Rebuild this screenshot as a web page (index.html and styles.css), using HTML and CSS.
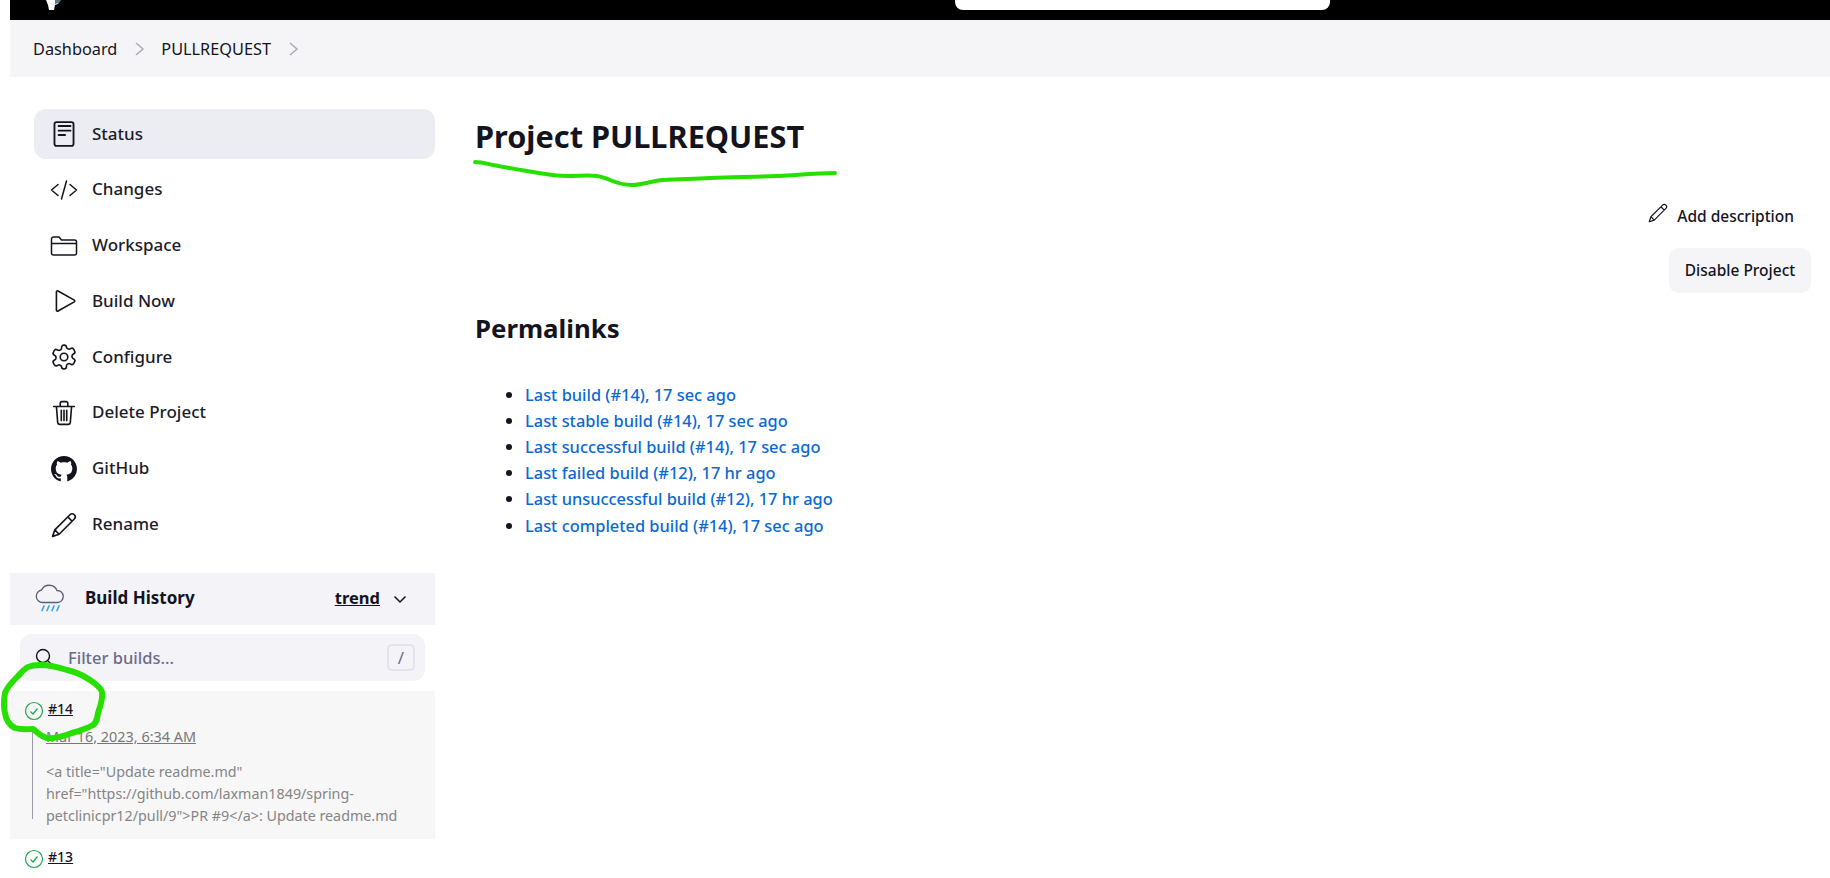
FILE: index.html
```html
<!DOCTYPE html>
<html lang="en">
<head>
    <meta charset="UTF-8">
    <title>PULLREQUEST [Jenkins]</title>
    <link rel="stylesheet" href="styles.css">
</head>
<body>
    <header class="topbar">
        <svg class="logo" width="30" height="10" viewBox="0 0 30 10"><path d="M8 0h14l-2 4-3 1-1 5h-5l-1-5z" fill="#fff"/><path d="M17 0h6l-2 3-4 1z" fill="#5b7a86"/></svg>
        <div class="search"></div>
    </header>
    <nav class="breadcrumbs">
        <a href="#">Dashboard</a>
        <svg class="crumb-sep" width="12" height="16" viewBox="0 0 12 16"><path d="M2 2l7 6-7 6" fill="none" stroke="#a9a9b8" stroke-width="1.5"/></svg>
        <a href="#">PULLREQUEST</a>
        <svg class="crumb-sep" width="12" height="16" viewBox="0 0 12 16"><path d="M2 2l7 6-7 6" fill="none" stroke="#a9a9b8" stroke-width="1.5"/></svg>
    </nav>

    <div class="page">
        <aside class="sidebar">
            <ul class="tasks">
                <li class="task active">
                    <svg class="icon icon-status" viewBox="0 0 24 24"><rect x="3.200" y="1" width="17.600" height="22" rx="2"/><path d="M7 4.600h11M7 8.900h11M7 12.900h6"/></svg>
                    <span>Status</span>
                </li>
                <li class="task">
                    <svg class="icon wide" viewBox="0 0 28 24"><path d="M8 6.500L1.500 12 8 17.500M20 6.500l6.500 5.500-6.500 5.500M16.500 3l-5 18"/></svg>
                    <span>Changes</span>
                </li>
                <li class="task">
                    <svg class="icon wide" viewBox="0 0 28 24"><path d="M1.500 19V5a2 2 0 0 1 2-2h5.500l2.500 3H24.500a2 2 0 0 1 2 2v11a2 2 0 0 1-2 2h-21a2 2 0 0 1-2-2zM1.500 9.500h25"/></svg>
                    <span>Workspace</span>
                </li>
                <li class="task">
                    <svg class="icon" viewBox="0 0 24 24"><path d="M5 3.500v17a1 1 0 0 0 1.500.8l15-8.500a1 1 0 0 0 0-1.600l-15-8.500A1 1 0 0 0 5 3.500z"/></svg>
                    <span>Build Now</span>
                </li>
                <li class="task">
                    <svg class="icon" viewBox="0 0 24 24"><path d="M12.220 1h-.44a2 2 0 0 0-2 2v.68a2 2 0 0 1-1 1.730l-.43.250a2 2 0 0 1-2 0l-.65-.28a2 2 0 0 0-2.730.730l-.720 1.380a2 2 0 0 0 .730 2.730l.650.4a2 2 0 0 1 1 1.720v.51a2 2 0 0 1-1 1.740l-.650.39a2 2 0 0 0-.730 2.730l.720 1.380a2 2 0 0 0 2.730.730l.650-.28a2 2 0 0 1 2 0l.43.250a2 2 0 0 1 1 1.730V21a2 2 0 0 0 2 2h.44a2 2 0 0 0 2-2v-.680a2 2 0 0 1 1-1.730l.43-.250a2 2 0 0 1 2 0l.650.280a2 2 0 0 0 2.730-.730l.720-1.390a2 2 0 0 0-.730-2.730l-.650-.380a2 2 0 0 1-1-1.740v-.5a2 2 0 0 1 1-1.740l.650-.390a2 2 0 0 0 .730-2.730l-.720-1.380a2 2 0 0 0-2.730-.730l-.650.280a2 2 0 0 1-2 0l-.43-.250a2 2 0 0 1-1-1.730V3a2 2 0 0 0-2-2z"/><circle cx="12" cy="12" r="3.500"/></svg>
                    <span>Configure</span>
                </li>
                <li class="task">
                    <svg class="icon" viewBox="0 0 24 24"><path d="M5 6l1.200 15a2 2 0 0 0 2 1.500h7.600a2 2 0 0 0 2-1.500L19 6M2.500 6h19M8.500 6V3a1.500 1.500 0 0 1 1.500-1.500h4A1.500 1.500 0 0 1 15.500 3v3M9.500 9.500v9.500M12 9.500v9.500M14.500 9.500v9.500"/></svg>
                    <span>Delete Project</span>
                </li>
                <li class="task">
                    <svg class="icon solid" viewBox="0 0 16 16"><path d="M8 0C3.580 0 0 3.580 0 8c0 3.540 2.290 6.530 5.470 7.590.4.070.55-.17.55-.38 0-.19-.01-.82-.01-1.490-2.010.37-2.530-.49-2.690-.94-.09-.23-.48-.94-.82-1.130-.28-.15-.68-.52-.01-.53.63-.01 1.080.58 1.230.82.720 1.210 1.870.870 2.330.660.070-.520.280-.870.510-1.070-1.780-.2-3.640-.890-3.640-3.950 0-.870.310-1.590.820-2.150-.080-.2-.360-1.020.080-2.120 0 0 .670-.210 2.200.820.640-.180 1.320-.270 2-.270s1.360.090 2 .270c1.530-1.040 2.200-.820 2.200-.820.440 1.100.160 1.920.080 2.120.510.560.820 1.270.820 2.150 0 3.070-1.870 3.750-3.650 3.950.290.250.540.730.540 1.480 0 1.070-.010 1.930-.010 2.200 0 .210.150.460.550.380A8.013 8.013 0 0 0 16 8c0-4.420-3.580-8-8-8z"/></svg>
                    <span>GitHub</span>
                </li>
                <li class="task">
                    <svg class="icon" viewBox="0 0 24 24"><path d="M17.500 2.500a2.800 2.800 0 0 1 4 4L7.500 20.500 1.500 22.500l2-6zM15.500 4.500l4 4M3.500 16.500l4 4"/></svg>
                    <span>Rename</span>
                </li>
            </ul>

            <section class="history">
                <div class="history-head">
                    <svg class="weather" width="30" height="30" viewBox="0 0 30 30">
                        <path d="M7.500 20.500A6.300 6.300 0 0 1 6.500 8A8.500 8.500 0 0 1 22 8.500A6 6 0 0 1 22.500 20.500z" fill="none" stroke="#5c5c78" stroke-width="1.300"/>
                        <path d="M9 24l-2 4.500M14 24l-2 4.500M19 24l-2 4.500M24 24l-2 4.500" fill="none" stroke="#35a9e6" stroke-width="1.700" stroke-linecap="round"/>
                    </svg>
                    <span class="history-title">Build History</span>
                    <a class="trend" href="#">trend</a>
                    <svg class="chevron" width="14" height="14" viewBox="0 0 14 14"><path d="M1.500 4.500L7 10l5.500-5.500" fill="none" stroke="#14141f" stroke-width="1.500"/></svg>
                </div>
                <div class="filter">
                    <svg class="filter-icon" width="18" height="18" viewBox="0 0 18 18"><circle cx="8" cy="8" r="6.500" fill="none" stroke="#14141f" stroke-width="1.400"/><path d="M13 13l4 4" stroke="#14141f" stroke-width="1.400"/></svg>
                    <span class="placeholder">Filter builds...</span>
                    <kbd class="slash">/</kbd>
                </div>
                <div class="build selected">
                    <div class="build-top">
                        <svg class="ok" width="20" height="20" viewBox="0 0 20 20"><circle cx="10" cy="10" r="8.500"/><path d="M6.500 10.500l2.500 2.500 4.500-5.500"/></svg>
                        <a class="build-num" href="#">#14</a>
                    </div>
                    <div class="build-body">
                        <a class="build-date" href="#">Mar 16, 2023, 6:34 AM</a>
                        <p class="build-desc">&lt;a title="Update readme.md" href="https://github.com/laxman1849/spring-petclinicpr12/pull/9"&gt;PR #9&lt;/a&gt;: Update readme.md</p>
                    </div>
                </div>
                <div class="build">
                    <div class="build-top">
                        <svg class="ok" width="20" height="20" viewBox="0 0 20 20"><circle cx="10" cy="10" r="8.500"/><path d="M6.500 10.500l2.500 2.500 4.500-5.500"/></svg>
                        <a class="build-num" href="#">#13</a>
                    </div>
                </div>
            </section>
        </aside>

        <main class="content">
            <h1>Project PULLREQUEST</h1>
            <div class="actions">
                <a class="add-desc" href="#">
                    <svg class="pen" width="20" height="20" viewBox="0 0 24 24"><path d="M17.500 2.500a2.800 2.800 0 0 1 4 4L7.500 20.500 1.500 22.500l2-6zM15.500 4.500l4 4M3.500 16.500l4 4" fill="none" stroke="#14141f" stroke-width="1.400" stroke-linejoin="round"/></svg>
                    Add description
                </a>
                <button class="disable">Disable Project</button>
            </div>
            <h2>Permalinks</h2>
            <ul class="permalinks">
                <li><a href="#">Last build (#14), 17 sec ago</a></li>
                <li><a href="#">Last stable build (#14), 17 sec ago</a></li>
                <li><a href="#">Last successful build (#14), 17 sec ago</a></li>
                <li><a href="#">Last failed build (#12), 17 hr ago</a></li>
                <li><a href="#">Last unsuccessful build (#12), 17 hr ago</a></li>
                <li><a href="#">Last completed build (#14), 17 sec ago</a></li>
            </ul>
        </main>
    </div>

    <!-- marker strokes drawn over the page -->
    <svg class="marker" width="1830" height="878" viewBox="0 0 1830 878">
        <path class="stroke-thin" d="M475 162C482 162 488 164 493 165C510 168 520 170 533 172C545 174 556 176 567 176C578 176 590 175 597 176C602 177 606 178 610 180C617 183 624 185 632 185C642 185 652 181 663 180C680 179 695 179 710 178C735 177 755 177 777 176C798 175 815 173 835 173"/>
        <path class="stroke-thick" d="M40 665C50 665 58 667 67 670C76 672 84 676 90 680C96 684 101 688 102 692C103 700 100 707 98 713C97 719 97 722 93 725C86 729 79 731 72 733C64 736 55 739 47 738C41 737 37 732 33 729C27 729 21 730 15 728C9 725 6 720 5 713C3 706 4 699 5 693C7 687 12 682 17 677C21 673 25 668 28 667C33 665 36 665 40 665"/>
    </svg>
</body>
</html>
```

FILE: styles.css
```css
* {
    box-sizing: border-box;
}
html, body {
    height: 878px;
    overflow: hidden;
}
body {
    font-family: "Noto Sans", Arial, sans-serif;
    color: #14141f;
    background-color: #fff;
    margin: 0;
    padding: 0 0 0 10px;
    position: relative;
}
a {
    color: inherit;
}

/* top bar */
.topbar {
    height: 20px;
    background-color: #000;
    display: flex;
    align-items: flex-start;
    padding-left: 28px;
}
.logo {
    flex: none;
}
.search {
    width: 375px;
    height: 10px;
    margin-left: 887px;
    background-color: #fff;
    border-radius: 0 0 8px 8px;
}
.breadcrumbs {
    height: 57px;
    background-color: #f5f5f7;
    display: flex;
    align-items: center;
    padding-left: 23px;
    font-size: 16.300px;
}
.breadcrumbs a {
    text-decoration: none;
}
.crumb-sep {
    margin: 0 15px 0 17px;
}

/* page columns */
.page {
    display: flex;
}
.sidebar {
    width: 425px;
    flex: none;
    padding-top: 32px;
}
.tasks {
    list-style: none;
    margin: 0 0 23px 24px;
    padding: 0;
}
.task {
    height: 50px;
    margin-bottom: 5.800px;
    display: flex;
    align-items: center;
    padding-left: 16px;
    font-size: 17px;
    font-weight: 500;
    color: #1c1c2b;
    border-radius: 12px;
}
.task span {
    margin-top: -2px;
}
.task.active {
    background-color: #ecedf2;
}
.icon {
    width: 28px;
    height: 26px;
    margin-right: 14px;
    fill: none;
    stroke: #14141f;
    stroke-width: 1.500;
    stroke-linejoin: round;
    stroke-linecap: round;
}
.icon-status {
    stroke-width: 1.700;
}
.icon.solid {
    fill: #14141f;
    stroke: none;
}

/* build history */
.history-head {
    height: 52px;
    background-color: #f3f3f8;
    display: flex;
    align-items: center;
    padding-left: 25px;
}
.weather {
    margin: -4px 20px 0 0;
}
.history-title {
    font-size: 17px;
    font-weight: 700;
    flex: 1;
    margin-top: -2px;
}
.trend {
    font-size: 16.500px;
    font-weight: 700;
    margin: -2px 13px 0 0;
}
.chevron {
    margin-right: 28px;
}
.filter {
    height: 47px;
    margin: 9px 10px 10px;
    background-color: #f3f3f8;
    border-radius: 12px;
    display: flex;
    align-items: center;
    padding: 0 10px 0 15px;
}
.filter-icon {
    margin-right: 15px;
}
.placeholder {
    flex: 1;
    font-size: 16.500px;
    font-weight: 500;
    color: #6d6b8a;
}
.slash {
    width: 28px;
    height: 27px;
    border: 2px solid #e3e3ec;
    border-radius: 5px;
    font-family: "Noto Sans", Arial, sans-serif;
    font-size: 17px;
    color: #6d6b8a;
    display: flex;
    align-items: center;
    justify-content: center;
}
.build {
    padding: 8px 0 0 14px;
}
.build.selected {
    height: 148px;
    background-color: #f7f7f8;
}
.build-top {
    display: flex;
    align-items: flex-start;
    gap: 4px;
    height: 26px;
}
.ok {
    margin-top: 2px;
    fill: none;
    stroke: #1ea64b;
    stroke-width: 1.200;
}
.build-num {
    font-size: 14px;
    font-weight: 500;
    line-height: 20px;
}
.build-body {
    margin: 2px 0 0 7.500px;
    padding-left: 13.500px;
    border-left: 1px solid #9a9aa8;
    height: 92px;
}
.build-date {
    display: block;
    font-size: 14.400px;
    color: #777;
    line-height: 20px;
}
.build-desc {
    margin: 14px 0 0;
    font-size: 14.300px;
    line-height: 22.400px;
    color: #858585;
    width: 370px;
}

/* main content */
.content {
    flex: 1;
    padding: 36px 19px 0 40px;
}
h1 {
    margin: 0;
    font-size: 30.700px;
    line-height: 46px;
    font-weight: 700;
}
.actions {
    margin-top: 44px;
    display: flex;
    flex-direction: column;
    align-items: flex-end;
    gap: 18.500px;
}
.add-desc {
    display: flex;
    align-items: center;
    gap: 9px;
    font-size: 15.500px;
    font-weight: 500;
    text-decoration: none;
    margin-right: 17px;
}
.pen {
    margin-bottom: 6px;
}
.disable {
    width: 142px;
    height: 45px;
    background-color: #f5f5f7;
    border: none;
    border-radius: 10px;
    font-family: inherit;
    font-size: 15.500px;
    font-weight: 500;
    color: #14141f;
}
h2 {
    margin: 15px 0 0;
    font-size: 25.800px;
    line-height: 40px;
    font-weight: 700;
}
.permalinks {
    margin: 34px 0 0;
    padding-left: 50px;
    font-size: 16.400px;
    line-height: 26.200px;
}
.permalinks a {
    color: #0b69d4;
    text-decoration: none;
    font-weight: 500;
}

/* marker overlay */
.marker {
    position: absolute;
    left: 0;
    top: 0;
    pointer-events: none;
}
.marker path {
    fill: none;
    stroke: #27e000;
    stroke-linecap: round;
    stroke-linejoin: round;
}
.stroke-thin {
    stroke-width: 4;
}
.stroke-thick {
    stroke-width: 6;
}
```
